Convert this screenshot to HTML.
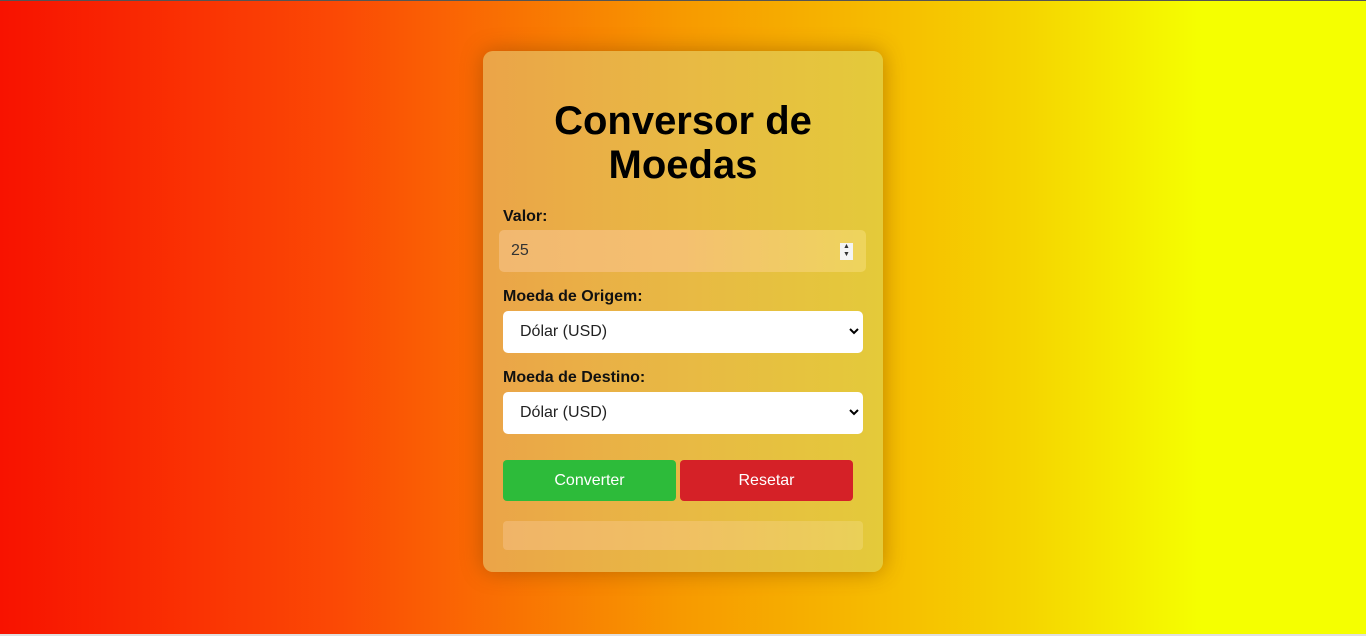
<!DOCTYPE html>
<html><head><meta charset="utf-8"><style>
html,body{margin:0;padding:0;}
body{width:1366px;height:636px;overflow:hidden;font-family:"Liberation Sans",Arial,sans-serif;
background:linear-gradient(to right,#f81200 0%,#fb4a05 25%,#f79a00 50%,#f5d400 75%,#f5ff00 88%,#f5ff00 100%);position:relative;border-top:1px solid #555;box-sizing:border-box;}
.bot{position:absolute;left:0;right:0;bottom:0;height:2px;background:#e0e0e0;}
.card{position:absolute;left:483px;top:50px;width:400px;height:521px;border-radius:10px;
background:linear-gradient(to right,#eba448,#e8b944 50%,#e4ca3a);box-shadow:0 0 22px rgba(120,60,0,0.45);}
h1{position:absolute;left:0;width:400px;top:48px;margin:0;text-align:center;font-size:40px;line-height:44px;font-weight:bold;color:#000;}
label{position:absolute;left:20px;font-size:16px;font-weight:bold;color:#111;}
.inp{position:absolute;left:16px;top:179px;width:367px;height:42px;border-radius:5px;background:linear-gradient(to right,#f2b870,#f4c070 50%,#eed45c);}
.inp span{position:absolute;left:12px;top:12px;font-size:16px;color:#333;}
.spin{position:absolute;right:13px;top:13px;width:13px;height:17px;background:#f4f4f4;font-size:7px;line-height:8px;text-align:center;color:#333;}
.sel{position:absolute;left:20px;width:360px;height:42px;border-radius:5px;background:#fff;}
.sel span{position:absolute;left:17px;top:12px;font-size:16px;color:#222;}
.sel svg{position:absolute;right:4px;top:17px;}
.btn{position:absolute;top:409px;height:41px;width:173px;border-radius:4px;color:#fff;font-size:16px;text-align:center;line-height:41px;}
.res{position:absolute;left:20px;top:470px;width:360px;height:29px;border-radius:4px;background:linear-gradient(to right,#f0b468,#f0c063 50%,#ead058);}
</style></head><body>
<div class="card">
<h1>Conversor de<br>Moedas</h1>
<label style="top:157px">Valor:</label>
<div class="inp"><span>25</span><div class="spin">▲<br>▼</div></div>
<label style="top:237px">Moeda de Origem:</label>
<div class="sel" style="top:260px"><span>Dólar (USD)</span><svg width="10" height="7" viewBox="0 0 10 7"><path d="M1 1l4 4 4-4" stroke="#000" stroke-width="2" fill="none"/></svg></div>
<label style="top:318px">Moeda de Destino:</label>
<div class="sel" style="top:341px"><span>Dólar (USD)</span><svg width="10" height="7" viewBox="0 0 10 7"><path d="M1 1l4 4 4-4" stroke="#000" stroke-width="2" fill="none"/></svg></div>
<div class="btn" style="left:20px;background:#2dbb3a">Converter</div>
<div class="btn" style="left:197px;background:#d52127">Resetar</div>
<div class="res"></div>
</div>
<div class="bot"></div>
</body></html>
